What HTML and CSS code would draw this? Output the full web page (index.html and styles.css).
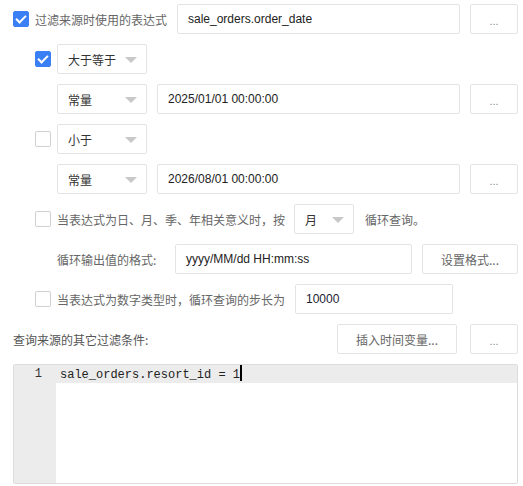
FILE: index.html
```html
<!DOCTYPE html>
<html lang="zh">
<head>
    <meta charset="UTF-8">
    <title>过滤条件</title>
    <link rel="stylesheet" href="styles.css">
</head>
<body>
    <div class="panel">
        <div class="row">
            <label class="check head"><span class="box on"></span>过滤来源时使用的表达式</label>
            <div class="field grow">sale_orders.order_date</div>
            <div class="btn dots">...</div>
        </div>

        <div class="row lv1">
            <span class="box on"></span>
            <div class="select">大于等于<i class="caret"></i></div>
        </div>
        <div class="row lv2">
            <div class="select">常量<i class="caret"></i></div>
            <div class="field grow">2025/01/01 00:00:00</div>
            <div class="btn dots">...</div>
        </div>

        <div class="row lv1">
            <span class="box"></span>
            <div class="select">小于<i class="caret"></i></div>
        </div>
        <div class="row lv2">
            <div class="select">常量<i class="caret"></i></div>
            <div class="field grow">2026/08/01 00:00:00</div>
            <div class="btn dots">...</div>
        </div>

        <div class="row lv1">
            <span class="box"></span>
            <span class="text">当表达式为日、月、季、年相关意义时，按</span>
            <div class="select small">月<i class="caret"></i></div>
            <span class="text after">循环查询。</span>
        </div>
        <div class="row lv2">
            <span class="text fmt-label">循环输出值的格式:</span>
            <div class="field fmt">yyyy/MM/dd HH:mm:ss</div>
            <div class="btn wide">设置格式...</div>
        </div>

        <div class="row lv1">
            <span class="box"></span>
            <span class="text">当表达式为数字类型时，循环查询的步长为</span>
            <div class="field step">10000</div>
        </div>

        <div class="row">
            <span class="text title">查询来源的其它过滤条件:</span>
            <div class="btn insert">插入时间变量...</div>
            <div class="btn dots">...</div>
        </div>

        <div class="editor">
            <div class="gutter"><div class="num">1</div></div>
            <div class="code">
                <div class="line active">sale_orders.resort_id = 1<span class="cursor"></span></div>
            </div>
        </div>
    </div>
</body>
</html>
```

FILE: styles.css
```css
body {
    margin: 0;
    background: #fff;
    font-family: "Noto Sans CJK SC", "Liberation Sans", sans-serif;
    font-size: 12px;
    color: #333;
}
.panel {
    width: 505px;
    padding: 4px 5px 0 13px;
}
.row {
    display: flex;
    align-items: center;
    height: 30px;
    margin-bottom: 10px;
}
.lv1 {
    margin-left: 22px;
}
.lv2 {
    margin-left: 44px;
}

/* checkbox */
.box {
    width: 16px;
    height: 16px;
    box-sizing: border-box;
    border: 1px solid #d0d0d0;
    border-radius: 2px;
    margin-right: 6px;
    flex: none;
    position: relative;
    background: #fff;
}
.box.on {
    background: #3b7ff5;
    border-color: #3b7ff5;
}
.box.on::after {
    content: "";
    position: absolute;
    left: 4px;
    top: 1px;
    width: 4px;
    height: 8px;
    border: solid #fff;
    border-width: 0 2px 2px 0;
    transform: rotate(45deg);
}
.check {
    display: flex;
    align-items: center;
    color: #666;
}
.head {
    width: 164px;
}
.text {
    color: #666;
    white-space: nowrap;
}
.text.after {
    margin-left: 11px;
}
.fmt-label {
    width: 118px;
}
.title {
    width: 324px;
    color: #555;
}

/* inputs, selects, buttons */
.field, .select, .btn {
    box-sizing: border-box;
    height: 30px;
    border: 1px solid #e4e4e4;
    border-radius: 2px;
    background: #fff;
    display: flex;
    align-items: center;
    flex: none;
}
.field {
    padding-left: 10px;
    font-family: "Liberation Sans", sans-serif;
    font-size: 12px;
    color: #222;
}
.select + .field {
    margin-left: 10px;
}
.grow {
    flex: 1;
}
.select {
    width: 90px;
    padding-left: 10px;
    position: relative;
    color: #333;
}
.select.small {
    width: 60px;
    margin-left: 9px;
}
.caret {
    position: absolute;
    right: 9px;
    top: 12px;
    border-left: 6px solid transparent;
    border-right: 6px solid transparent;
    border-top: 6px solid #c8c8c8;
}
.btn {
    justify-content: center;
    color: #666;
    margin-left: 10px;
}
.dots {
    width: 48px;
    font-family: "Liberation Sans", sans-serif;
    font-size: 11px;
    color: #888;
    padding-top: 4px;
}
.fmt {
    width: 237px;
}
.wide {
    width: 96px;
}
.step {
    width: 158px;
    margin-left: 10px;
    color: #223;
}
.insert {
    width: 120px;
    margin-left: 0;
    margin-right: 3px;
}

/* code editor */
.editor {
    display: flex;
    height: 120px;
    box-sizing: border-box;
    border: 1px solid #dcdcdc;
    border-radius: 2px;
    overflow: hidden;
}
.gutter {
    width: 42px;
    background: #ececec;
    flex: none;
}
.num {
    height: 18px;
    line-height: 18px;
    text-align: right;
    padding-right: 14px;
    font-family: "Liberation Mono", monospace;
    font-size: 12px;
    color: #333;
}
.code {
    flex: 1;
}
.line {
    height: 18px;
    line-height: 18px;
    padding-left: 4px;
    font-family: "Liberation Mono", monospace;
    font-size: 12px;
    color: #222;
    white-space: pre;
}
.line.active {
    background: #ececec;
}
.cursor {
    display: inline-block;
    width: 2px;
    height: 16px;
    background: #000;
    vertical-align: -3px;
}
```
